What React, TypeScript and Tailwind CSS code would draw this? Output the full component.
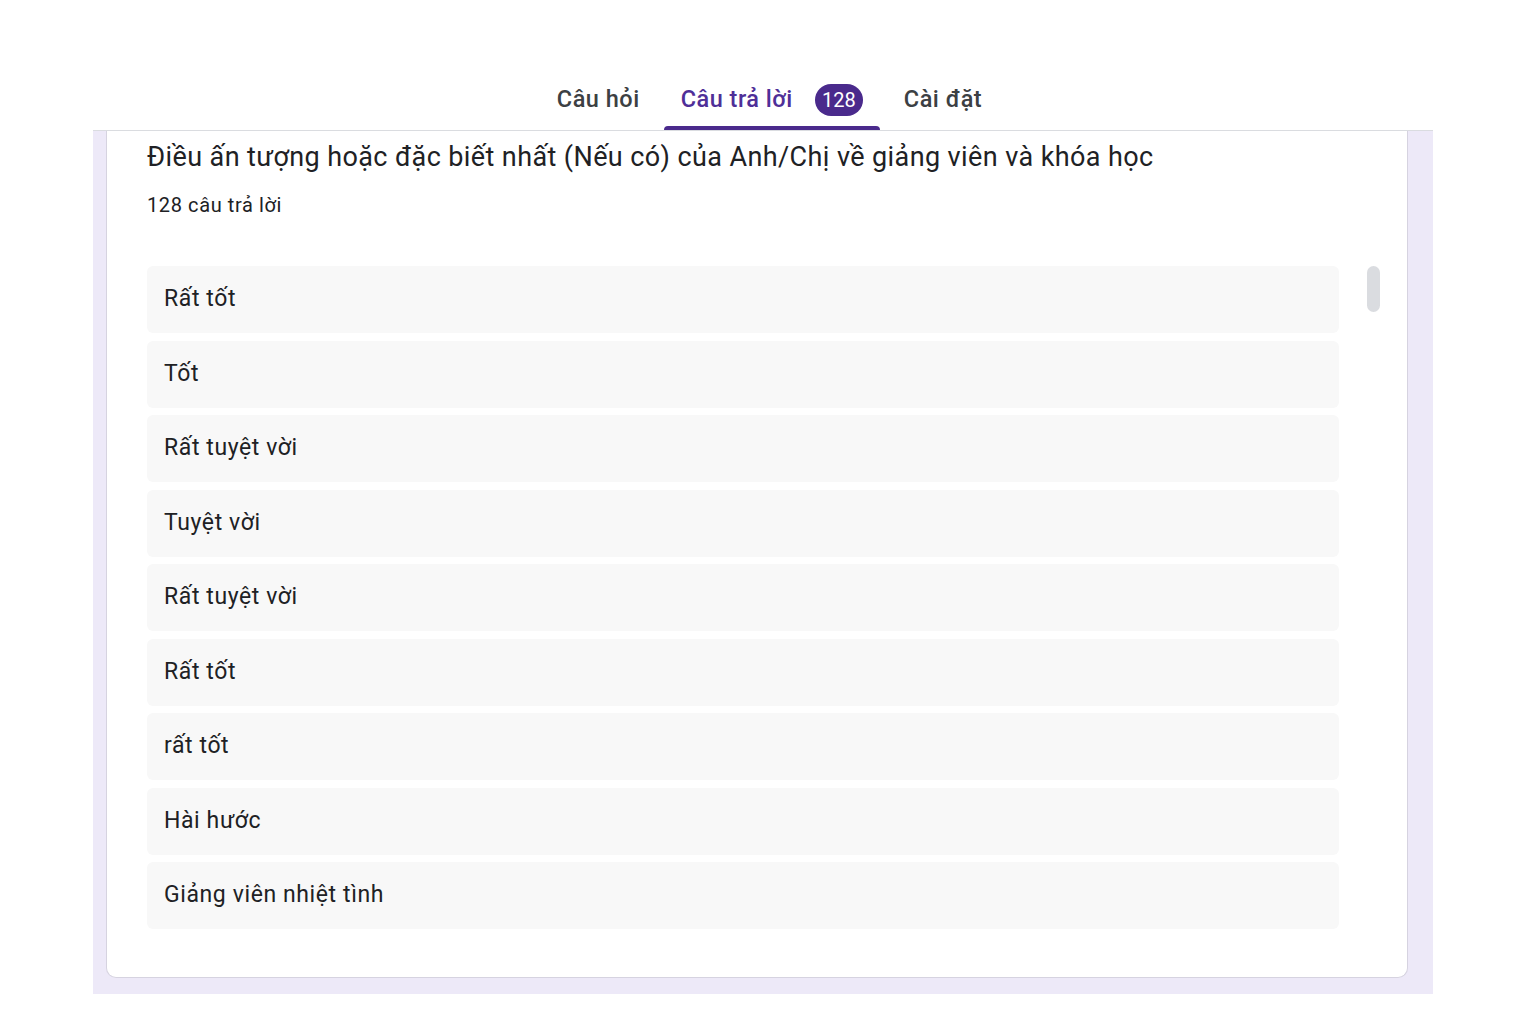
import React from "react";

const answers = [
  "Rất tốt",
  "Tốt",
  "Rất tuyệt vời",
  "Tuyệt vời",
  "Rất tuyệt vời",
  "Rất tốt",
  "rất tốt",
  "Hài hước",
  "Giảng viên nhiệt tình",
];

function Tab({ label, active, badge }: { label: string; active?: boolean; badge?: string }) {
  return (
    <div className="relative flex h-[60px] items-center px-[17px] pb-[1px]">
      <span
        className={
          "text-[23.5px] font-medium tracking-[0.5px] " +
          (active ? "text-[#4f2f98]" : "text-[#3c4043]")
        }
      >
        {label}
      </span>
      {badge && (
        <span className="ml-[22px] flex h-[32px] w-[48px] items-center justify-center rounded-full bg-[#4a2a8c] text-[20px] text-white">
          {badge}
        </span>
      )}
      {active && (
        <div className="absolute bottom-0 left-0 right-0 h-[4px] rounded-t-[4px] bg-[#4a2a8c]" />
      )}
    </div>
  );
}

export default function App() {
  return (
    <div className="h-[1016px] w-full bg-white font-['Roboto',sans-serif] text-[#202124]">
      <div className="flex justify-center gap-[7px] pt-[70px]">
        <Tab label="Câu hỏi" />
        <Tab label="Câu trả lời" active badge="128" />
        <Tab label="Cài đặt" />
      </div>

      <div className="ml-[93px] w-[1340px] border-t border-[#dadce0] bg-[#ede9f8] pb-[16px] pl-[13px] pr-[25px]">
        <div className="rounded-b-[10px] border border-t-0 border-[#d6d3e0] bg-white pb-[48px] pl-[40px] pt-[10px]">
          <h2 className="text-[27px] leading-[32px] tracking-[0.4px] text-[#202124]">
            Điều ấn tượng hoặc đặc biết nhất (Nếu có) của Anh/Chị về giảng viên và khóa học
          </h2>
          <p className="mt-[20px] text-[20px] leading-[24px] tracking-[0.6px] text-[#202124]">128 câu trả lời</p>

          <div className="mt-[49px] flex">
            <div className="flex flex-1 flex-col gap-[7.5px]">
              {answers.map((a, i) => (
                <div
                  key={i}
                  className="flex h-[67px] items-center rounded-[6px] bg-[#f8f8f8] px-[17px] text-[23px] tracking-[0.6px] text-[#202124]"
                >
                  {a}
                </div>
              ))}
            </div>
            <div className="ml-[28px] mr-[27px] w-[13px]">
              <div className="h-[46px] rounded-full bg-[#dadce0]" />
            </div>
          </div>
        </div>
      </div>
    </div>
  );
}
